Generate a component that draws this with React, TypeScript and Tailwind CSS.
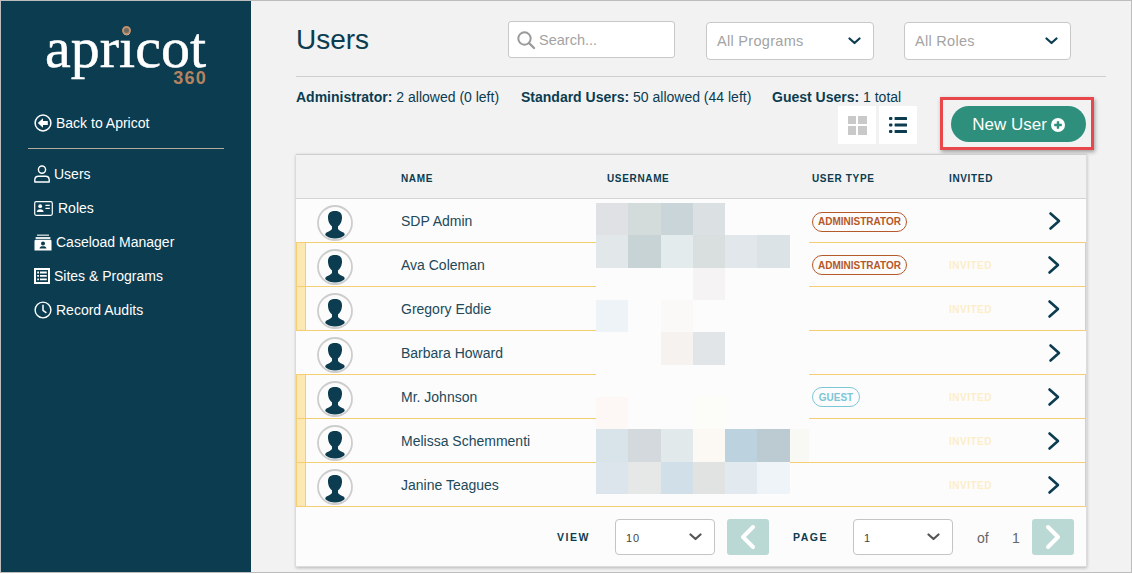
import React from "react";

const navy = "#0b3c50";

function Chevron({ className = "" }: { className?: string }) {
  return (
    <svg width="14" height="20" viewBox="0 0 14 20" className={className} fill="none" stroke={navy} strokeWidth="2.6" strokeLinecap="round" strokeLinejoin="round">
      <path d="M2.5 2.5 L11 10 L2.5 17.5" />
    </svg>
  );
}

function SelectChevron({ color = navy, w = 13 }: { color?: string; w?: number }) {
  return (
    <svg width={w} height="8" viewBox="0 0 13 8" fill="none" stroke={color} strokeWidth="2.2" strokeLinecap="round" strokeLinejoin="round">
      <path d="M1.5 1.5 L6.5 6 L11.5 1.5" />
    </svg>
  );
}

function Avatar({ id }: { id: string }) {
  return (
    <svg width="36" height="36" viewBox="0 0 36 36" className="block shrink-0">
      <defs>
        <clipPath id={id}>
          <circle cx="18" cy="18" r="15.6" />
        </clipPath>
      </defs>
      <circle cx="18" cy="18" r="17" fill="#fcfcfc" stroke="#cdcdcd" strokeWidth="1.8" />
      <path
        fill={navy}
        clipPath={`url(#${id})`}
        d="M18 6 C12.5 6 10.8 9 11 13 C11.1 15.5 12 18 13.2 19.6 C14 20.6 14.6 21 15 21.4 L15 24 C14 25.6 11.6 26.4 9.6 27.4 C8.4 28 8 29 8 36 L28 36 C28 29 27.6 28 26.4 27.4 C24.4 26.4 22 25.6 21 24 L21 21.4 C21.4 21 22 20.6 22.8 19.6 C24 18 24.9 15.5 25 13 C25.2 9 23.5 6 18 6 Z"
      />
    </svg>
  );
}

const IconBack = () => (
  <svg width="18" height="18" viewBox="0 0 18 18" fill="none">
    <circle cx="9" cy="9" r="7.9" stroke="#fff" strokeWidth="1.5" />
    <path d="M3.8 9 L9 4.2 V7 H13.8 V11 H9 V13.8 Z" fill="#fff" />
  </svg>
);
const IconUser = () => (
  <svg width="16" height="18" viewBox="0 0 16 18" fill="none" stroke="#fff" strokeWidth="1.4">
    <circle cx="8" cy="4.6" r="3.6" />
    <path d="M0.8 17 V14.8 C0.8 12.6 2.6 11.2 4.6 11.2 H11.4 C13.4 11.2 15.2 12.6 15.2 14.8 V17 Z" strokeLinejoin="round" />
  </svg>
);
const IconCard = () => (
  <svg width="19" height="15" viewBox="0 0 19 15" fill="none">
    <rect x="0.7" y="0.7" width="17.6" height="13.6" rx="1.5" stroke="#fff" strokeWidth="1.2" />
    <circle cx="6.2" cy="5.2" r="1.9" fill="#fff" />
    <path d="M2.8 11 C2.8 9 4.2 8.2 6.2 8.2 C8.2 8.2 9.6 9 9.6 11 Z" fill="#fff" />
    <path d="M11.4 4.4 H15.8 M11.4 7.4 H15.8" stroke="#fff" strokeWidth="1.3" />
  </svg>
);
const IconCaseload = () => (
  <svg width="18" height="17" viewBox="0 0 18 17" fill="none">
    <rect x="3" y="0.5" width="12" height="1.4" fill="#c9d3d6" />
    <rect x="1.6" y="3" width="14.8" height="2" fill="#e4e8ea" />
    <path d="M0.5 7 Q0.5 5.8 1.7 5.8 H16.3 Q17.5 5.8 17.5 7 V16.5 H0.5 Z" fill="#fff" />
    <circle cx="9" cy="9.6" r="2" fill={navy} />
    <path d="M5.6 14.6 C5.6 12.8 7 12.2 9 12.2 C11 12.2 12.4 12.8 12.4 14.6 Z" fill={navy} />
  </svg>
);
const IconList = () => (
  <svg width="16" height="16" viewBox="0 0 16 16">
    <path fillRule="evenodd" fill="#fff" d="M0 0 H16 V16 H0 Z M2 2 V14 H14 V2 Z" />
    <path fill="#fff" d="M3.2 3.6 H5 V5.4 H3.2 Z M6 3.6 H12.8 V5.4 H6 Z M3.2 7 H5 V8.8 H3.2 Z M6 7 H12.8 V8.8 H6 Z M3.2 10.4 H5 V12.2 H3.2 Z M6 10.4 H12.8 V12.2 H6 Z" />
  </svg>
);
const IconClock = () => (
  <svg width="18" height="18" viewBox="0 0 18 18" fill="none" stroke="#fff">
    <circle cx="9" cy="9" r="7.9" strokeWidth="1.4" />
    <path d="M9 3.8 V9.4 L12.4 11.8" strokeWidth="1.5" />
  </svg>
);

const navItems: [React.ReactNode, string, string][] = [
  [<IconUser />, "Users", "gap-[4px]"],
  [<IconCard />, "Roles", "gap-[5px]"],
  [<IconCaseload />, "Caseload Manager", "gap-[4px]"],
  [<IconList />, "Sites & Programs", "gap-[4px]"],
  [<IconClock />, "Record Audits", "gap-[4px]"],
];

type Row = { name: string; pending: boolean; badge?: "admin" | "guest" };
const rows: Row[] = [
  { name: "SDP Admin", pending: false, badge: "admin" },
  { name: "Ava Coleman", pending: true, badge: "admin" },
  { name: "Gregory Eddie", pending: true },
  { name: "Barbara Howard", pending: false },
  { name: "Mr. Johnson", pending: true, badge: "guest" },
  { name: "Melissa Schemmenti", pending: true },
  { name: "Janine Teagues", pending: true },
];

const F = "#fcfcfc";
const blur: [number, string[]][] = [
  [32, ["#dfe1e4", "#d3dcdb", "#c9d5d8", "#dbe0e3", F, F, F]],
  [33, ["#e2e8ea", "#c8d3d6", "#e4ebed", "#d9dedf", "#e2e7ec", "#dce3e6", F]],
  [32, [F, F, F, "#f6f3f4", F, F, F]],
  [32, ["#edf3f7", F, "#fbf9f8", F, F, F, F]],
  [33, [F, F, "#f6f2f0", "#e1e5e8", F, F, F]],
  [32, [F, F, F, F, F, F, F]],
  [32, ["#fdf8f5", F, F, "#fcfcf8", F, F, F]],
  [33, ["#d9e4ea", "#d3d9dd", "#e1e9ea", "#fcf8f3", "#bcd2de", "#bccad2", "#f8f8f4"]],
  [32, ["#dce5ec", "#e6e8e8", "#d0dfe8", "#e0e3e1", "#e2eaf0", "#eef4f8", "transparent"]],
];

function Badge({ kind }: { kind: "admin" | "guest" }) {
  if (kind === "admin")
    return (
      <span className="inline-flex h-[20px] w-[95px] items-center justify-center rounded-full border border-[#b5582a] text-[10px] font-bold text-[#b5582a]">
        ADMINISTRATOR
      </span>
    );
  return (
    <span className="inline-flex h-[20px] w-[48px] items-center justify-center rounded-full border border-[#7cc6d6] text-[10px] font-bold text-[#7cc6d6]">
      GUEST
    </span>
  );
}

function PageSelect({ value, width }: { value: string; width: string }) {
  return (
    <div className={`flex h-[36px] items-center justify-between rounded-[4px] border border-[#c4c4c4] bg-white pl-[10px] pr-[12px] ${width}`}>
      <span className="mt-[2px] text-[11px] tracking-[1px] text-[#444]">{value}</span>
      <SelectChevron color="#555" />
    </div>
  );
}

function PageButton({ dir }: { dir: "l" | "r" }) {
  return (
    <div className="flex h-[36px] w-[42px] items-center justify-center rounded-[3px] bg-[#bbd9d4]">
      <svg width="18" height="26" viewBox="0 0 18 26" fill="none" stroke="#fff" strokeWidth="4" strokeLinecap="round" strokeLinejoin="round">
        <path d={dir === "l" ? "M14 3 L4 13 L14 23" : "M4 3 L14 13 L4 23"} />
      </svg>
    </div>
  );
}

export default function App() {
  return (
    <div className="flex h-[573px] w-[1132px] overflow-hidden border-x border-t border-b border-[#bdbdbd] bg-[#f2f2f2] font-['Liberation_Sans',Arial,sans-serif] text-[14px] text-[#0b3c50]">
      <aside className="flex w-[250px] shrink-0 flex-col bg-[#0b3c50] text-white">
        <div className="relative ml-[44px] mt-[17px] h-[72px] w-[170px] font-['Liberation_Serif',serif] text-[58px] leading-[60px] text-white">
          <span className="[-webkit-text-stroke:0.5px_white]">apricot</span>
          <span className="absolute left-[77px] top-[8px] h-[9px] w-[9px] rounded-full border-[2.5px] border-[#c0906c] bg-[#6d6a62] shadow-[0_-4px_0_2px_#0b3c50]" />
          <span className="absolute right-[8px] top-[51px] font-['Liberation_Sans',sans-serif] text-[18px] font-bold leading-[18px] tracking-[1.2px] text-[#b5835f]">
            360
          </span>
        </div>
        <div className="ml-[33px] mt-[24px] flex h-[18px] items-center gap-[4px]">
          <IconBack />
          <span>Back to Apricot</span>
        </div>
        <div className="ml-[27px] mt-[16px] h-px w-[196px] bg-[#b5ab98]" />
        <nav className="ml-[33px] mt-[16px] flex flex-col gap-[16px]">
          {navItems.map(([icon, label, gap]) => (
            <div key={label} className={`flex h-[18px] items-center ${gap}`}>
              {icon}
              <span>{label}</span>
            </div>
          ))}
        </nav>
      </aside>

      <main className="flex min-w-0 flex-1 flex-col pl-[45px] pr-[25px]">
        <header className="flex h-[76px] shrink-0 items-start border-b border-[#cfcfcf]">
          <h1 className="mt-[22px] w-[212px] text-[28px] font-normal leading-[34px]">Users</h1>
          <div className="mt-[20px] flex h-[37px] w-[167px] items-center gap-[3px] rounded-[3px] border border-[#c8c8c8] bg-white pl-[7px]">
            <svg width="20" height="20" viewBox="0 0 20 20" fill="none" stroke="#9a9a9a" strokeWidth="2">
              <circle cx="8.5" cy="8.5" r="6.2" />
              <path d="M13 13 L18 18" strokeLinecap="round" strokeWidth="2.4" />
            </svg>
            <span className="pt-[2px] text-[14.5px] text-[#a3a3a3]">Search...</span>
          </div>
          <div className="ml-[31px] mt-[21px] flex h-[38px] w-[168px] items-center justify-between rounded-[4px] border border-[#c8c8c8] bg-white pl-[10px] pr-[12px]">
            <span className="pt-[2px] text-[14.5px] tracking-[0.3px] text-[#a3a3a3]">All Programs</span>
            <SelectChevron />
          </div>
          <div className="ml-[30px] mt-[21px] flex h-[38px] w-[167px] items-center justify-between rounded-[4px] border border-[#c8c8c8] bg-white pl-[10px] pr-[12px]">
            <span className="pt-[2px] text-[14.5px] tracking-[0.3px] text-[#a3a3a3]">All Roles</span>
            <SelectChevron />
          </div>
        </header>

        <div className="mt-[12px] flex h-[16px] items-center text-[14px] leading-[16px]">
          <span className="w-[225px]"><b>Administrator:</b> 2 allowed (0 left)</span>
          <span className="w-[251px]"><b>Standard Users:</b> 50 allowed (44 left)</span>
          <span><b>Guest Users:</b> 1 total</span>
        </div>

        <div className="ml-[542px] mt-[1px] flex h-[38px] items-start">
          <div className="flex h-[38px] w-[38px] items-center justify-center bg-white">
            <div className="grid grid-cols-2 gap-[2px]">
              <span className="h-[8.5px] w-[8.5px] bg-[#c9c9c9]" />
              <span className="h-[8.5px] w-[8.5px] bg-[#c9c9c9]" />
              <span className="h-[8.5px] w-[8.5px] bg-[#c9c9c9]" />
              <span className="h-[8.5px] w-[8.5px] bg-[#c9c9c9]" />
            </div>
          </div>
          <div className="ml-[3px] flex h-[38px] w-[38px] items-center justify-center bg-white">
            <svg width="18" height="18" viewBox="0 0 18 18" fill={navy}>
              <rect x="0" y="1" width="3.4" height="3" rx="1" />
              <rect x="5.6" y="1" width="12.4" height="3" rx="0.6" />
              <rect x="0" y="7.5" width="3.4" height="3" rx="1" />
              <rect x="5.6" y="7.5" width="12.4" height="3" rx="0.6" />
              <rect x="0" y="14" width="3.4" height="3" rx="1" />
              <rect x="5.6" y="14" width="12.4" height="3" rx="0.6" />
            </svg>
          </div>
          <div className="relative ml-[34px] flex h-[36px] w-[135px] items-center justify-center gap-[4px] rounded-full bg-[#2e8f7c] pt-[1px] text-[17px] text-white">
            <span>New User</span>
            <svg width="14" height="14" viewBox="0 0 14 14">
              <circle cx="7" cy="7" r="7" fill="#fff" />
              <path d="M7 3.2 V10.8 M3.2 7 H10.8" stroke="#2e8f7c" strokeWidth="2.4" />
            </svg>
            <span className="absolute -bottom-[8px] -left-[11px] -right-[8px] -top-[9px] border-[3px] border-[#e8474c] shadow-[1px_2px_4px_rgba(0,0,0,0.35)]" />
          </div>
        </div>

        <section className="relative mt-[10px] h-[413px] w-[791px] shrink-0 border-y border-r border-[#dcdcdc] border-t-[#cfcfcf] bg-[#fcfcfc] shadow-[0_1px_3px_rgba(0,0,0,0.25)]">
          <div className="grid h-[44px] grid-cols-[105px_206px_205px_137px_1fr] items-center border-b border-[#d4d4d4] bg-[#f2f2f2] pt-[4px] text-[10px] font-bold tracking-[0.65px]">
            <span className="col-start-2">NAME</span>
            <span>USERNAME</span>
            <span>USER TYPE</span>
            <span>INVITED</span>
          </div>

          {rows.map((r, i) => (
            <div
              key={r.name}
              className={`relative flex items-center ${i === 0 ? "h-[44px]" : "-mt-px h-[45px]"} ${
                r.pending ? "border border-[#f5cd72]" : ""
              }`}
            >
              <div className={`flex h-full shrink-0 items-center ${r.pending ? "w-[104px]" : "w-[105px]"}`}>
                {r.pending ? <span className="h-full w-[9px] shrink-0 border-r border-[#f5cd72] bg-[#fde8b4]" /> : <span className="w-[10px] shrink-0" />}
                <span className={`ml-[11px] ${i === 0 ? "mt-[3px]" : "mt-[4px]"}`}><Avatar id={`avatar-clip-${i}`} /></span>
              </div>
              <span className={`w-[411px] shrink-0 text-[14px] text-[#21495a] ${i === 0 ? "" : "mt-[1px]"}`}>{r.name}</span>
              <div className="w-[137px] shrink-0">{r.badge && <Badge kind={r.badge} />}</div>
              <span className="mt-[1px] w-[98px] shrink-0 text-[10px] font-bold tracking-[0.5px] text-[#fdeec8]">{r.pending ? "INVITED" : ""}</span>
              <Chevron className={r.pending ? "shrink-0" : "ml-[1px] shrink-0"} />
            </div>
          ))}

          <div className="absolute left-[300px] top-[48px] w-[213px]">
            {blur.map(([h, cells], y) => (
              <div key={y} className="flex" style={{ height: h, background: y === 8 ? "transparent" : F }}>
                {cells.map((c, x) => (
                  <span key={x} className={x === 6 ? "w-[19px]" : x === 1 || x === 5 ? "w-[33px]" : "w-[32px]"} style={{ backgroundColor: c }} />
                ))}
              </div>
            ))}
          </div>

          <div className="flex h-[60px] items-start pt-[12px]">
            <span className="ml-[261px] mt-[11px] w-[58px] text-[10.5px] font-bold tracking-[1.5px]">VIEW</span>
            <PageSelect value="10" width="w-[100px]" />
            <span className="ml-[12px]"><PageButton dir="l" /></span>
            <span className="ml-[24px] mt-[11px] w-[60px] text-[10.5px] font-bold tracking-[1.5px]">PAGE</span>
            <PageSelect value="1" width="w-[100px]" />
            <span className="ml-[24px] mt-[9px] w-[35px] text-[14px] text-[#666]">of</span>
            <span className="mt-[9px] w-[20px] text-[14px] text-[#666]">1</span>
            <PageButton dir="r" />
          </div>
        </section>
      </main>
    </div>
  );
}
